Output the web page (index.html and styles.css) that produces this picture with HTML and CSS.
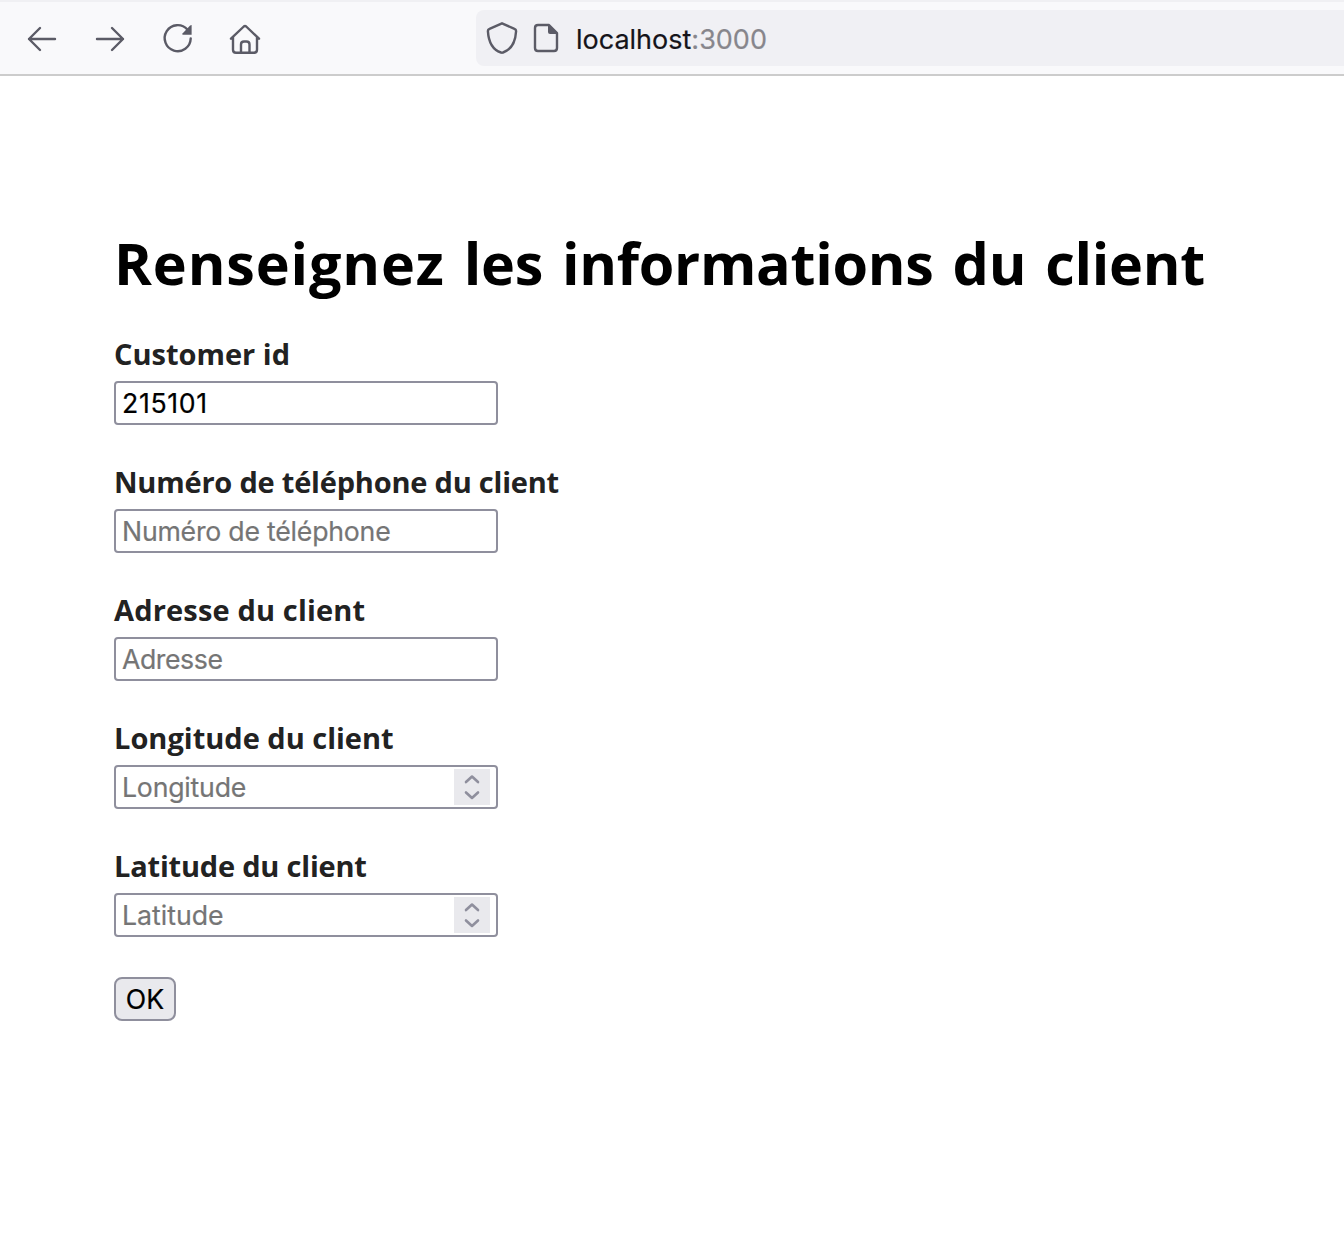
FILE: index.html
```html
<!DOCTYPE html>
<html lang="fr">
<head>
<meta charset="utf-8">
<title>Client</title>
<link rel="stylesheet" href="styles.css">
</head>
<body>
<header class="toolbar">
  <nav class="nav">
    <svg class="icon" viewBox="0 0 32 32"><path d="M29 16H3M14 5L3 16l11 11"/></svg>
    <svg class="icon" viewBox="0 0 32 32"><path d="M3 16h26M18 5L29 16 18 27"/></svg>
    <svg class="icon" viewBox="0 0 32 32"><path d="M29.700 15.500A13 13 0 1 1 26.400 6.500"/><path class="solid" d="M30.600 2v9.800h-8.500q-1.400-.3-.6-1.400l7.600-8z"/></svg>
    <svg class="icon" viewBox="0 0 32 32"><path d="M2 15.700L14.800 3.500q1.200-1 2.400 0L30 15.700M4 14v12.800q0 3 3 3h18q3 0 3-3V14M12 29.500V21.500q0-3 3-3h2.500q3 0 3 3V29.500"/></svg>
  </nav>
  <div class="address">
    <svg class="icon" viewBox="0 0 32 32"><path d="M16 1.300L28.500 6.800q1.700.7 1.600 2.300C29.500 19 26 27.500 17 30.500q-1 .4-2 0C6 27.500 2.500 19 1.900 9.100q-.1-1.600 1.600-2.300z"/></svg>
    <svg class="icon page-icon" viewBox="0 0 32 32"><path d="M8 3h11l8 8v15q0 3-3 3H8q-3 0-3-3V6q0-3 3-3z"/><path class="solid" d="M18 3l10 9h-8q-2 0-2-2z"/></svg>
    <span class="url">localhost<span class="port">:3000</span></span>
  </div>
</header>
<main class="content">
  <h1 class="title"><span class="title-lead">Renseignez</span> les informations du client</h1>
  <form class="form">
    <div class="row">
      <label class="label" for="id">Customer id</label>
      <div class="field"><input class="input input-id" id="id" value="215101"></div>
    </div>
    <div class="row">
      <label class="label label-phone" for="phone">Numéro de téléphone du client</label>
      <div class="field"><input class="input input-phone" id="phone" placeholder="Numéro de téléphone"></div>
    </div>
    <div class="row">
      <label class="label label-address" for="address">Adresse du client</label>
      <div class="field"><input class="input input-address" id="address" placeholder="Adresse"></div>
    </div>
    <div class="row">
      <label class="label" for="lng">Longitude du client</label>
      <div class="field"><input class="input input-lng" id="lng" placeholder="Longitude"><svg class="spinner" viewBox="0 0 36 36"><path d="M12 13l6-5.500 6 5.500M12 23.500l6 5.500 6-5.500"/></svg></div>
    </div>
    <div class="row">
      <label class="label label-lat" for="lat">Latitude du client</label>
      <div class="field"><input class="input" id="lat" placeholder="Latitude"><svg class="spinner" viewBox="0 0 36 36"><path d="M12 13l6-5.500 6 5.500M12 23.500l6 5.500 6-5.500"/></svg></div>
    </div>
    <button class="submit" type="button">OK</button>
  </form>
</main>
</body>
</html>
```
FILE: styles.css
```css
* { box-sizing: border-box; }
body { margin: 0; min-height: 1246px; background: #fff; font-family: Inter, sans-serif; }

.toolbar {
  display: flex;
  align-items: center;
  height: 76px;
  padding-left: 26px;
  background: #f9f9fb;
  border-top: 2px solid #f0f0f3;
  border-bottom: 2px solid #cccccc;
}
.nav { display: flex; gap: 35.700px; width: 450px; padding-top: 2px; }
.icon {
  flex: none;
  width: 32px;
  height: 32px;
  fill: none;
  stroke: #5b5b66;
  stroke-width: 2.400;
  stroke-linecap: round;
  stroke-linejoin: round;
}
.icon .solid { fill: #5b5b66; stroke: none; }
.address {
  display: flex;
  align-items: center;
  flex: 1;
  height: 56px;
  padding-left: 10px;
  background: #f0f0f4;
  border-radius: 8px 0 0 8px;
}
.page-icon { margin-left: 12px; }
.url { margin-left: 14px; padding-top: 4px; font-size: 27px; line-height: 52px; color: #15141a; -webkit-text-stroke: .2px; }
.port { color: #87868c; }

.content { padding: 148px 114px 0; }
.title {
  margin: 0;
  height: 80px;
  font: 700 57.500px/78px "Open Sans", sans-serif;
  letter-spacing: -.3px;
  word-spacing: 4.500px;
  color: #000;
  white-space: nowrap;
}
.title-lead { letter-spacing: .850px; }
.form { display: flex; flex-direction: column; align-items: flex-start; gap: 40px; padding-top: 33px; }
.row { display: flex; flex-direction: column; align-items: flex-start; height: 88px; }
.label { height: 44px; font: 700 29px/34px "Open Sans", sans-serif; color: #222; white-space: nowrap; }
.label-phone { letter-spacing: -.210px; }
.label-address { letter-spacing: .160px; }
.label-lat { letter-spacing: -.200px; }
.field {
  display: flex;
  align-items: center;
  width: 384px;
  height: 44px;
  padding: 0 6px;
  border: 2px solid #8f8f9d;
  border-radius: 4px;
  background: #fff;
}
.input {
  flex: 1;
  min-width: 0;
  height: 40px;
  padding: 0;
  border: 0;
  outline: 0;
  background: none;
  font: 26.700px Inter, sans-serif;
  color: #000;
  -webkit-text-stroke: .2px;
}
.input-id { letter-spacing: .650px; }
.input-phone { letter-spacing: -.230px; }
.input-address { letter-spacing: -.450px; }
.input-lng { letter-spacing: -.220px; }
.input::placeholder { color: #757575; opacity: 1; }
.spinner { flex: none; width: 36px; height: 36px; background: #e9e9ed; fill: none; stroke: #8f8f9d; stroke-width: 2.600; stroke-linecap: round; stroke-linejoin: round; }
.submit {
  width: 62px;
  height: 44px;
  padding: 0 0 1px;
  border: 2px solid #8f8f9d;
  border-radius: 8px;
  background: #e9e9ed;
  font: 26.700px Inter, sans-serif;
  color: #000;
  -webkit-text-stroke: .2px;
}
```
